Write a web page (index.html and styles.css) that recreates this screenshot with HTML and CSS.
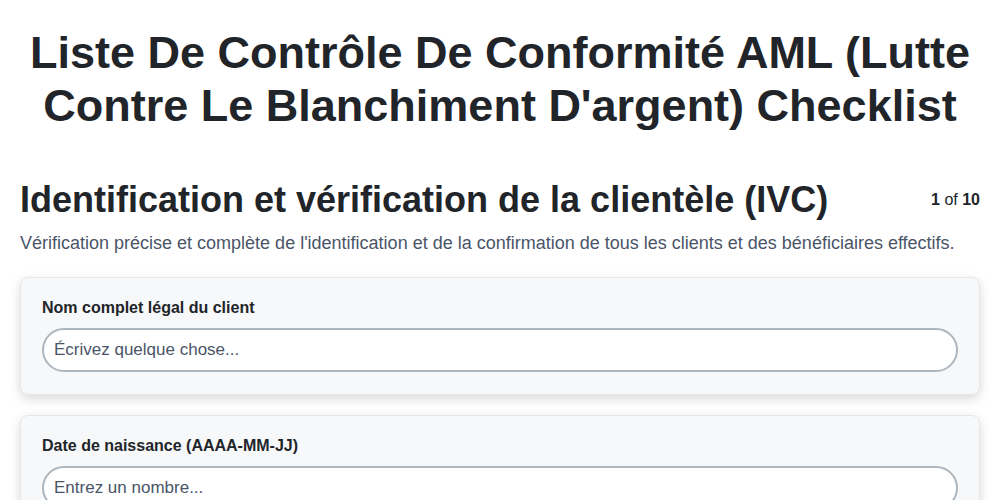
FILE: index.html
```html
<!DOCTYPE html>
<html>

<head>
  <meta charset="UTF-8">
  <title>Checklist AML</title>
  <link rel="stylesheet" href="styles.css">
</head>

<body>
  <h1 class="page-title">Liste De Contrôle De Conformité AML (Lutte Contre Le Blanchiment D'argent) Checklist</h1>

  <div class="section-head">
    <h2 class="section-title">Identification et vérification de la clientèle (IVC)</h2>
    <div class="pager"><b>1</b> of <b>10</b></div>
  </div>
  <p class="section-desc">Vérification précise et complète de l'identification et de la confirmation de tous les clients et des bénéficiaires effectifs.</p>

  <div class="question">
    <label class="question-label">Nom complet légal du client</label>
    <input class="question-input" type="text" placeholder="Écrivez quelque chose...">
  </div>

  <div class="question">
    <label class="question-label">Date de naissance (AAAA-MM-JJ)</label>
    <input class="question-input" type="text" placeholder="Entrez un nombre...">
  </div>
</body>

</html>
```

FILE: styles.css
```css
body {
  font-family: "Liberation Sans", Arial, sans-serif;
  color: #212529;
  background-color: #fff;
  margin: 0;
  padding: 0 20px;
}

.page-title {
  font-size: 45px;
  line-height: 53px;
  text-align: center;
  margin: 26px 0 46px;
}

.section-head {
  display: flex;
  justify-content: space-between;
  align-items: center;
}

.section-title {
  font-size: 36px;
  margin: 0;
  line-height: 1.2;
}

.pager {
  font-size: 16px;
}

.section-desc {
  font-size: 18px;
  color: #4a5568;
  margin: 12px 0 23px;
}

.question {
  background-color: #f7f8fa;
  border: 1px solid #e5e7eb;
  border-radius: 8px;
  box-shadow: 0 4px 12px rgba(0, 0, 0, 0.15);
  padding: 21px 21px 22px;
  margin-bottom: 20px;
}

.question-label {
  display: block;
  font-size: 16px;
  font-weight: bold;
  margin-bottom: 11px;
}

.question-input {
  display: block;
  width: 100%;
  box-sizing: border-box;
  height: 44px;
  border: 2px solid #adb5bd;
  border-radius: 22px;
  padding: 0 10px;
  font-family: inherit;
  font-size: 17px;
  background: #fff;
}

.question-input::placeholder {
  color: #4a5568;
}
```
